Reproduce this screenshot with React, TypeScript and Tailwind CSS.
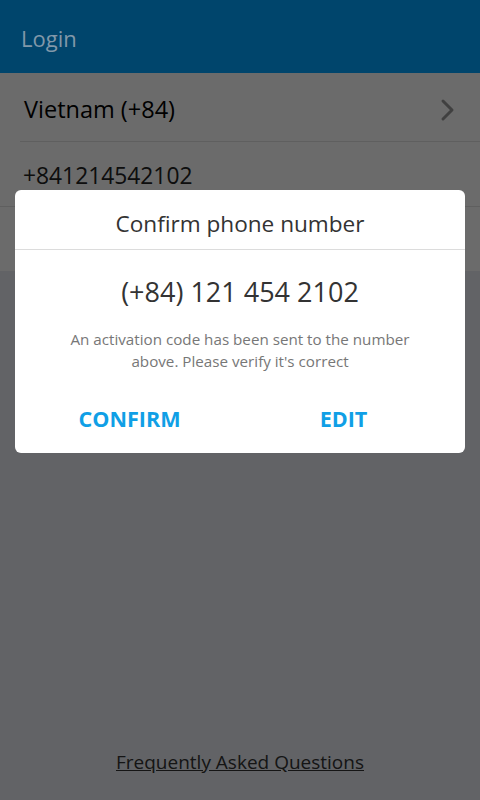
export default function App() {
  return (
    <div className="relative h-[800px] w-[480px] overflow-hidden bg-[#e9ecf2]" style={{ fontFamily: '"Open Sans", "Noto Sans", sans-serif' }}>
      <header className="relative z-10 flex h-[73px] items-center bg-[#00456c] pl-[21px] pt-[3px]">
        <h1 className="text-[22px] text-[#8198a9]">Login</h1>
      </header>
      <div className="bg-white">
        <div className="ml-5 flex h-[69px] items-center justify-between border-b border-[#e2e2e2] pr-[24px] pt-[5px]">
          <span className="pl-1 text-[23.5px] text-black">Vietnam (+84)</span>
          <svg width="16" height="24" viewBox="0 0 16 24" fill="none" stroke="#9a9a9a" strokeWidth="3" strokeLinecap="round" strokeLinejoin="round">
            <path d="M3 3l9 9-9 9" />
          </svg>
        </div>
        <div className="flex h-[65px] items-center border-b border-[#e2e2e2] pl-[23px] pt-[5px]">
          <span className="text-[22.8px] text-[#222]">+841214542102</span>
        </div>
        <div className="h-[64px]" />
      </div>
      <div className="absolute bottom-[24px] left-0 right-0 text-center">
        <a className="text-[19px] text-[#333] underline">Frequently Asked Questions</a>
      </div>

      <div className="absolute inset-x-0 bottom-0 top-[73px] bg-[rgba(0,0,0,0.58)]" />

      <div className="absolute left-[15px] top-[190px] w-[450px] rounded-md bg-white">
        <div className="flex h-[60px] items-center justify-center border-b border-[#dcdcdc] pt-[8px]">
          <span className="text-[22.6px] text-[#333]">Confirm phone number</span>
        </div>
        <div className="px-6 pt-[22px] text-center">
          <p className="text-[27px] leading-[40px] text-[#333]">(+84) 121 454 2102</p>
          <p className="mx-auto mt-[16px] w-[370px] text-[15.2px] leading-[22px] text-[#777]">
            An activation code has been sent to the number above. Please verify it's correct
          </p>
        </div>
        <div className="grid grid-cols-2 pb-[18px] pt-[31px]">
          <button className="pl-[4px] text-[21.6px] font-bold text-[#109fe6]">CONFIRM</button>
          <button className="pr-[18px] text-[21.6px] font-bold text-[#109fe6]">EDIT</button>
        </div>
      </div>
    </div>
  );
}
